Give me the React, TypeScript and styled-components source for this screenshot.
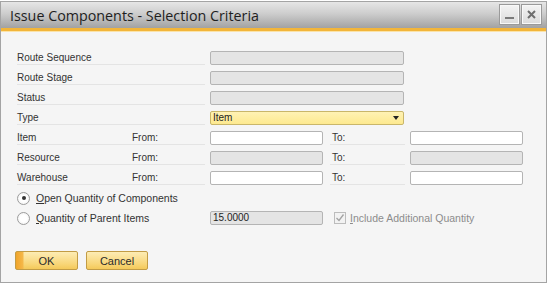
import React from "react";
import styled, { createGlobalStyle } from "styled-components";

const Global = createGlobalStyle`
  html, body { margin: 0; padding: 0; background: #ffffff; }
  body { font-family: "Liberation Sans", Arial, sans-serif; }
`;

const Window = styled.div`
  margin-top: 1px;
  width: 545px;
  height: 280px;
  border: 1px solid #a4a4a4;
  display: flex;
  flex-direction: column;
  background: #f5f5f5;
`;

const TitleBar = styled.div`
  height: 26px;
  display: flex;
  align-items: center;
  justify-content: space-between;
  padding: 0 5px 0 9px;
  background: linear-gradient(#e6e6e6 0%, #cdcdcd 45%, #a2a2a2 100%);
`;

const Title = styled.div`
  font-family: "Open Sans", "Noto Sans", sans-serif;
  font-size: 14.3px;
  color: #1e1e1e;
  padding-top: 1px;
`;

const Controls = styled.div`
  display: flex;
  gap: 3px;
  align-self: flex-start;
  margin-top: 3px;
`;

const WinButton = styled.div`
  width: 17px;
  height: 17px;
  border: 1px solid #f8f8f8;
  background: linear-gradient(#f2f2f2, #dcdcdc);
  box-shadow: 0 0 0 1px #9a9a9a;
  display: flex;
  align-items: center;
  justify-content: center;
`;

const Accent = styled.div`
  height: 3px;
  background: #f2b53a;
  border-bottom: 1px solid #fbe3a8;
`;

const Body = styled.div`
  flex: 1;
  padding: 16px 0 0 14px;
  display: flex;
  flex-direction: column;
`;

const Form = styled.div`
  padding-left: 2px;
  display: flex;
  flex-direction: column;
`;

const Row = styled.div`
  height: 20px;
  display: flex;
  align-items: center;
`;

const Label = styled.div<{ $w: number; $pad?: number }>`
  width: ${(p) => p.$w}px;
  height: 13px;
  padding-left: ${(p) => p.$pad ?? 0}px;
  box-sizing: border-box;
  margin-right: 5px;
  border-bottom: 1px solid #e4e4e4;
  font-size: 10px;
  line-height: 12px;
  color: #333333;
  display: flex;
  white-space: nowrap;
`;

const SubLabel = styled.span<{ $at: number }>`
  margin-left: auto;
  width: ${(p) => p.$at}px;
`;

const Field = styled.div<{ $w: number; $tone?: "gray" | "white" | "yellow" }>`
  width: ${(p) => p.$w}px;
  height: 14px;
  box-sizing: border-box;
  border: 1px solid ${(p) => (p.$tone === "yellow" ? "#c9b66a" : "#b4b4b4")};
  border-radius: 2px;
  background: ${(p) =>
    p.$tone === "gray"
      ? "#e4e4e4"
      : p.$tone === "yellow"
      ? "linear-gradient(#fff2b4, #fde98f)"
      : "#ffffff"};
  font-size: 10px;
  line-height: 12px;
  color: #1e1e1e;
  padding: 0 4px 0 2px;
  display: flex;
  align-items: center;
  justify-content: space-between;
`;

const Arrow = styled.span`
  width: 0;
  height: 0;
  border-left: 3.5px solid transparent;
  border-right: 3.5px solid transparent;
  border-top: 4px solid #222;
`;

const Gap = styled.div<{ $w: number }>`
  width: ${(p) => p.$w}px;
  flex: none;
`;

const RadioCell = styled.label`
  width: 193px;
  display: flex;
  align-items: center;
  gap: 6px;
  font-size: 10.5px;
  color: #333333;
  white-space: nowrap;
`;

const Radio = styled.span<{ $on?: boolean }>`
  width: 11px;
  height: 11px;
  border-radius: 50%;
  border: 1px solid #9c9c9c;
  background: radial-gradient(circle, #ffffff 40%, #ececec 100%);
  display: flex;
  align-items: center;
  justify-content: center;
  &::after {
    content: "";
    width: 4px;
    height: 4px;
    border-radius: 50%;
    background: ${(p) => (p.$on ? "#333" : "transparent")};
  }
`;

const CheckWrap = styled.div`
  margin-left: 11px;
  display: flex;
  align-items: center;
  gap: 4px;
  font-size: 10.5px;
  color: #8c8c8c;
  white-space: nowrap;
`;

const CheckBox = styled.span`
  width: 12px;
  height: 12px;
  box-sizing: border-box;
  border: 1px solid #bcbcbc;
  background: #f2f2f2;
  display: flex;
  align-items: center;
  justify-content: center;
`;

const Key = styled.span`
  text-decoration: underline;
`;

const ButtonBar = styled.div`
  margin-top: 23px;
  display: flex;
  gap: 8px;
`;

const Button = styled.div<{ $w: number; $default?: boolean }>`
  width: ${(p) => p.$w}px;
  height: 19px;
  box-sizing: border-box;
  border: 1px solid #c29c45;
  border-radius: 2px;
  background: ${(p) =>
    p.$default
      ? "linear-gradient(90deg, #f0a42a 0, #f5b84a 7px, transparent 8px), linear-gradient(#fdecb4, #f8d678 70%, #f4c95a)"
      : "linear-gradient(#fdecb4, #f8d678 70%, #f4c95a)"};
  font-size: 11px;
  color: #2b2b2b;
  display: flex;
  align-items: center;
  justify-content: center;
`;

export default function App() {
  return (
    <>
      <Global />
      <Window>
        <TitleBar>
          <Title>Issue Components - Selection Criteria</Title>
          <Controls>
            <WinButton>
              <svg width="11" height="11" viewBox="0 0 11 11">
                <rect x="1" y="8" width="9" height="2" fill="#7a7a7a" />
              </svg>
            </WinButton>
            <WinButton>
              <svg width="11" height="11" viewBox="0 0 11 11">
                <path d="M2 2 L9 9 M9 2 L2 9" stroke="#6e6e6e" strokeWidth="2" />
              </svg>
            </WinButton>
          </Controls>
        </TitleBar>
        <Accent />
        <Body>
          <Form>
            <Row>
              <Label $w={188}>Route Sequence</Label>
              <Field $w={194} $tone="gray" />
            </Row>
            <Row>
              <Label $w={188}>Route Stage</Label>
              <Field $w={194} $tone="gray" />
            </Row>
            <Row>
              <Label $w={188}>Status</Label>
              <Field $w={194} $tone="gray" />
            </Row>
            <Row>
              <Label $w={188}>Type</Label>
              <Field $w={194} $tone="yellow">
                Item
                <Arrow />
              </Field>
            </Row>
            {[
              { name: "Item", tone: "white" as const },
              { name: "Resource", tone: "gray" as const },
              { name: "Warehouse", tone: "white" as const },
            ].map((r) => (
              <Row key={r.name}>
                <Label $w={188}>
                  {r.name}
                  <SubLabel $at={73}>From:</SubLabel>
                </Label>
                <Field $w={113} $tone={r.tone} />
                <Gap $w={7} />
                <Label $w={75} $pad={2}>
                  To:
                </Label>
                <Field $w={113} $tone={r.tone} />
              </Row>
            ))}
            <Row>
              <RadioCell>
                <Radio $on />
                <span>
                  <Key>O</Key>pen Quantity of Components
                </span>
              </RadioCell>
            </Row>
            <Row>
              <RadioCell>
                <Radio />
                <span>
                  <Key>Q</Key>uantity of Parent Items
                </span>
              </RadioCell>
              <Field $w={113} $tone="gray">
                15.0000
              </Field>
              <CheckWrap>
                <CheckBox>
                  <svg width="10" height="10" viewBox="0 0 10 10">
                    <path d="M1.5 5 L4 7.5 L8.5 1.5" fill="none" stroke="#a2a2a2" strokeWidth="1.3" />
                  </svg>
                </CheckBox>
                <span>
                  <Key>I</Key>nclude Additional Quantity
                </span>
              </CheckWrap>
            </Row>
          </Form>
          <ButtonBar>
            <Button $w={63} $default>
              OK
            </Button>
            <Button $w={62}>Cancel</Button>
          </ButtonBar>
        </Body>
      </Window>
    </>
  );
}
